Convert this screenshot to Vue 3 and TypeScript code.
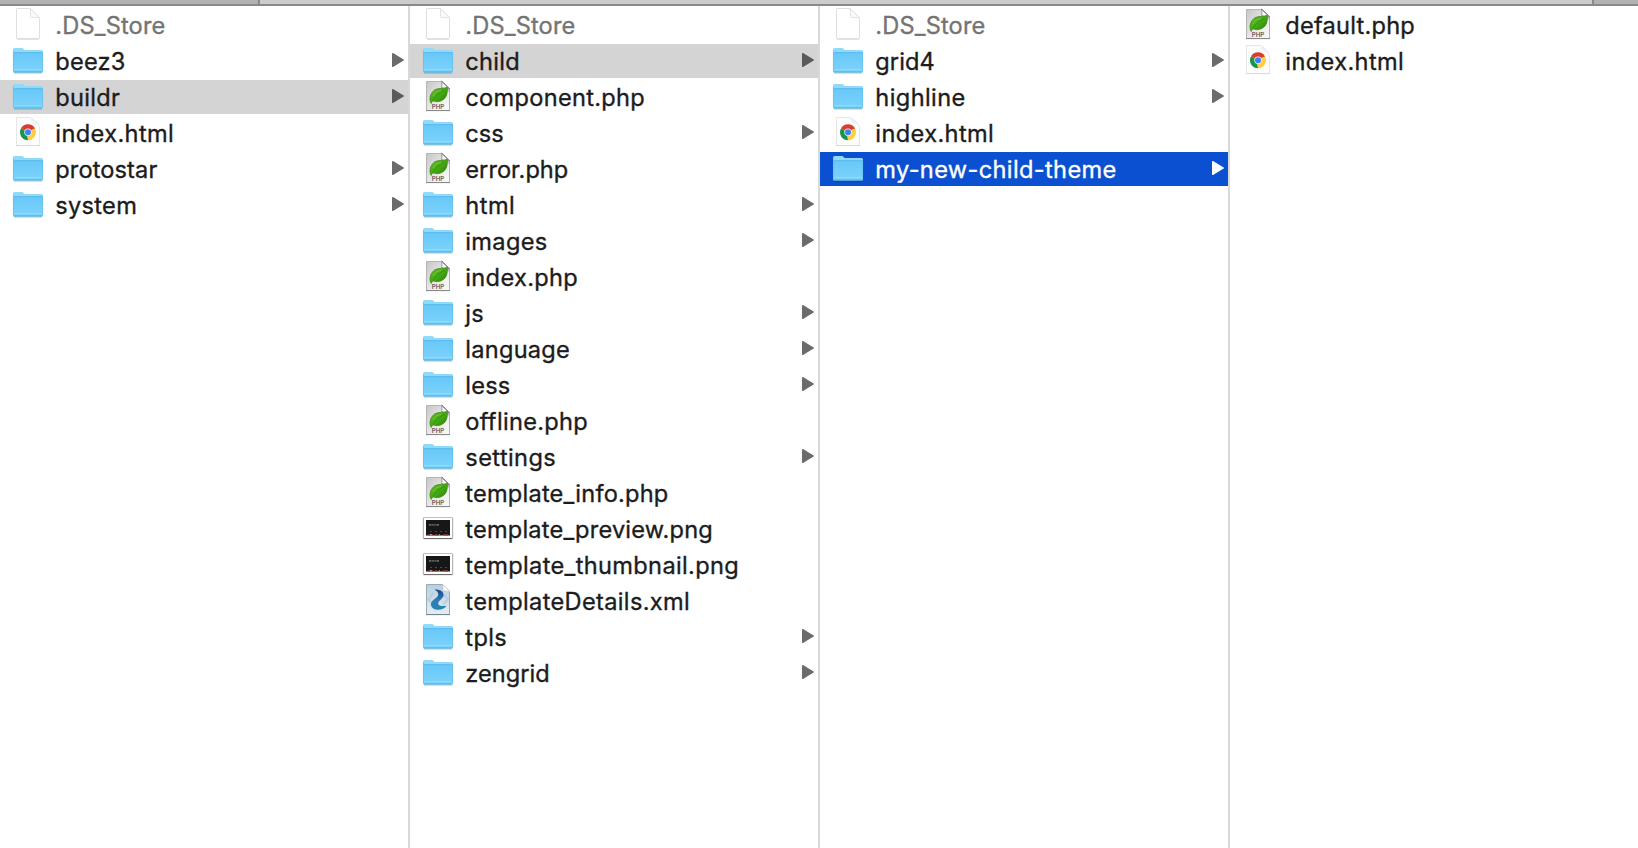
<script setup lang="ts">
type Kind = 'blank' | 'folder' | 'php' | 'chrome' | 'image' | 'xml'

interface Entry {
  name: string
  kind: Kind
  width: number
  state?: 'path' | 'active'
}

const columns: Entry[][] = [
  [
    { name: '.DS_Store', kind: 'blank', width: 110 },
    { name: 'beez3', kind: 'folder', width: 70 },
    { name: 'buildr', kind: 'folder', width: 64.5, state: 'path' },
    { name: 'index.html', kind: 'chrome', width: 118.5 },
    { name: 'protostar', kind: 'folder', width: 102 },
    { name: 'system', kind: 'folder', width: 81.5 },
  ],
  [
    { name: '.DS_Store', kind: 'blank', width: 110 },
    { name: 'child', kind: 'folder', width: 54.5, state: 'path' },
    { name: 'component.php', kind: 'php', width: 179.5 },
    { name: 'css', kind: 'folder', width: 38.5 },
    { name: 'error.php', kind: 'php', width: 103 },
    { name: 'html', kind: 'folder', width: 49.5 },
    { name: 'images', kind: 'folder', width: 82 },
    { name: 'index.php', kind: 'php', width: 112.5 },
    { name: 'js', kind: 'folder', width: 18.5 },
    { name: 'language', kind: 'folder', width: 104.5 },
    { name: 'less', kind: 'folder', width: 45 },
    { name: 'offline.php', kind: 'php', width: 122.5 },
    { name: 'settings', kind: 'folder', width: 90.5 },
    { name: 'template_info.php', kind: 'php', width: 203 },
    { name: 'template_preview.png', kind: 'image', width: 247.5 },
    { name: 'template_thumbnail.png', kind: 'image', width: 273.5 },
    { name: 'templateDetails.xml', kind: 'xml', width: 224.5 },
    { name: 'tpls', kind: 'folder', width: 41.5 },
    { name: 'zengrid', kind: 'folder', width: 84.5 },
  ],
  [
    { name: '.DS_Store', kind: 'blank', width: 110 },
    { name: 'grid4', kind: 'folder', width: 59.5 },
    { name: 'highline', kind: 'folder', width: 90 },
    { name: 'index.html', kind: 'chrome', width: 118.5 },
    { name: 'my-new-child-theme', kind: 'folder', width: 241, state: 'active' },
  ],
  [
    { name: 'default.php', kind: 'php', width: 129.5 },
    { name: 'index.html', kind: 'chrome', width: 118.5 },
  ],
]
</script>

<template>
  <div class="finder">
    <svg class="defs" width="0" height="0" aria-hidden="true">
      <defs>
        <linearGradient id="folderFill" x1="0" y1="0" x2="0" y2="1">
          <stop offset="0" stop-color="#67c8f8" />
          <stop offset="1" stop-color="#7dd3fb" />
        </linearGradient>
        <linearGradient id="pageGrey" x1="0" y1="0" x2="1" y2="1">
          <stop offset="0" stop-color="#c6c6c6" />
          <stop offset="0.6" stop-color="#ececec" />
          <stop offset="1" stop-color="#fafafa" />
        </linearGradient>
        <linearGradient id="leafFill" x1="0" y1="0" x2="1" y2="1">
          <stop offset="0" stop-color="#63bd25" />
          <stop offset="0.5" stop-color="#45ab13" />
          <stop offset="1" stop-color="#267c05" />
        </linearGradient>
        <linearGradient id="pageBlue" x1="0" y1="0" x2="0" y2="1">
          <stop offset="0" stop-color="#b9cfde" />
          <stop offset="1" stop-color="#e2eef7" />
        </linearGradient>
        <linearGradient id="swirl" x1="0" y1="0" x2="0" y2="1">
          <stop offset="0" stop-color="#17458e" />
          <stop offset="0.55" stop-color="#2f7fb5" />
          <stop offset="1" stop-color="#2384b4" />
        </linearGradient>
        <linearGradient id="curl" x1="0" y1="1" x2="1" y2="0">
          <stop offset="0" stop-color="#ffffff" />
          <stop offset="0.5" stop-color="#f0f0f0" />
          <stop offset="1" stop-color="#b4b4b4" />
        </linearGradient>
      </defs>
    </svg>

    <header class="tabs">
      <div class="tab first"></div>
      <div class="tab current"></div>
      <div class="tab add"></div>
    </header>

    <main class="columns">
      <ul v-for="(column, c) in columns" :key="c" class="column">
        <li v-for="entry in column" :key="entry.name" class="row" :class="[entry.kind, entry.state]">
          <svg class="icon" width="34" height="34" viewBox="0 0 34 34">
            <g v-if="entry.kind === 'folder'">
              <path d="M3 29h28" stroke="#000" stroke-opacity=".22" stroke-width="1.2" />
              <path d="M2 6q0-2 1.600-2h7.200q1 0 1.700.8l1 1.200H30.500q1.500 0 1.500 1.500V27q0 1.500-1.500 1.500h-27Q2 28.500 2 27z" fill="#8fdafb" />
              <path d="M2 8.700h30V27q0 1.300-1.500 1.300h-27Q2 28.300 2 27z" fill="url(#folderFill)" />
              <path d="M2.500 8.700h29" stroke="#59b9e9" stroke-width="1" />
              <path d="M2.400 6v21M31.600 8v19" stroke="#5fbce6" stroke-width=".8" opacity=".7" />
              <path d="M3 25.500h28" stroke="#93dcfc" stroke-width=".8" />
              <path d="M2.700 28h28.600" stroke="#53a9d2" stroke-width="1" />
            </g>
            <g v-else-if="entry.kind === 'blank'">
              <path d="M5.500 1.200q0-.7.700-.7H19.500l9 9V30q0 .7-.7.700H6.200q-.7 0-.7-.7z" fill="#fff" stroke="#dfdfdf" />
              <path d="M19.500.8V8.500q0 1 1 1h7.700z" fill="#fafafa" stroke="#e3e3e3" />
              <path d="M6 31.200h22" stroke="#d2d2d2" stroke-width=".8" />
            </g>
            <g v-else-if="entry.kind === 'php'">
              <path d="M5.500 1.500H21.500l7 7V30.500h-23z" fill="url(#pageGrey)" stroke="#b5b5b5" />
              <path d="M5 30.600h24" stroke="#858585" />
              <path d="M20.500 1.200L28.800 8.900z" stroke="#888" stroke-width="1" />
              <path d="M20.800 1.700V8l7.200.6z" fill="#f8f8f8" stroke="#8e8e8e" stroke-width=".9" />
              <path d="M21.500 8.300l7 .6v3.100z" fill="#777" opacity=".4" />
              <path d="M10.200 23.500C7.500 19 9.500 12.500 14 9.700c3.500-2 8.500-.6 12.300-2.500C26.500 10 26.600 15 24 18c-3 3.600-8.500 4.500-12.200 2.800-.8.700-1.200 1.700-1.600 2.700z" fill="url(#leafFill)" stroke="#38850f" stroke-width=".7" />
              <path d="M11.500 20.800c3.200-5 7-8 12-10.500" fill="none" stroke="#2e8909" stroke-width=".8" />
              <path d="M12 16c1.500-3.500 4-5 8-5.300" fill="none" stroke="#8cd64f" stroke-width="1" opacity=".6" />
              <text x="17" y="29" text-anchor="middle" textLength="12.500" lengthAdjust="spacingAndGlyphs" class="php-label">PHP</text>
            </g>
            <g v-else-if="entry.kind === 'chrome'">
              <path d="M5.500 1.500H19.500l9 9V29.500h-23z" fill="#fdfdfd" stroke="#e6e6e6" />
              <path d="M18.500 1.200c2.200 1.800 1.500 4.600 1.500 6.300 3-.4 6.500.2 8.500 2.500-1-3-6.500-8.500-10-8.800z" fill="url(#curl)" />
              <path d="M5 29.600h24" stroke="#d5d5d5" stroke-width=".8" />
              <g transform="translate(17 16.300)">
                <path d="M0 0L-6.930-4A8 8 0 0 1 6.930-4z" fill="#db3c30" />
                <path d="M0 0L-6.930-4A8 8 0 0 0 0 8z" fill="#17954f" />
                <path d="M0 0L6.930-4A8 8 0 0 1 0 8z" fill="#ffce43" />
                <path d="M0-4H6.900L7.200-3.500H0z" fill="#db3c30" />
                <path d="M-6.930-4L-3.460 2-1 3z" fill="#17954f" />
                <path d="M3.460 2L0 8-1 4z" fill="#ffce43" />
                <circle r="3.700" fill="#f2f2f2" />
                <circle r="3" fill="#4080f0" />
              </g>
            </g>
            <g v-else-if="entry.kind === 'image'">
              <rect x="1.600" y="5" width="30.800" height="22.400" rx="1.500" fill="#000" opacity=".14" />
              <rect x="2.300" y="5.500" width="29.400" height="21.500" rx=".8" fill="#888" opacity=".65" />
              <path d="M3 26.500h28" stroke="#6c6c6c" stroke-width="1" />
              <rect x="3" y="6" width="28" height="20" fill="#fff" />
              <rect x="5" y="8" width="24" height="15.500" fill="#171717" />
              <path d="M8 12.800h2.500m.7 0h1.600m.7 0h1.300m.7 0h2.500" stroke="#686868" stroke-width="1.800" />
              <path d="M9 19.500h2m3 0h2m3 0h2m3 0h2" stroke="#555" stroke-width=".8" />
              <path d="M7 22.800h5m2 0h3m5 0h5" stroke="#9b3928" stroke-width="1.300" />
              <path d="M9 22.800h2m7 0h1" stroke="#bcb8b0" stroke-width="1" />
            </g>
            <g v-else>
              <path d="M5.500.500H21.500l7 7V30.500h-23z" fill="url(#pageBlue)" stroke="#9caab4" />
              <path d="M5 30.600h24" stroke="#737f89" />
              <path d="M12.500 9L7.500 15.500l6.500 6M22 10l5 5.500-5 5" fill="none" stroke="#a9c3d5" stroke-width="2.500" opacity=".55" />
              <path d="M20.500.700c1.800 1.700 1.300 4.500 1 6.300 2.500-.3 5.500.500 7 2 0-3-5-8-8-8.300z" fill="#f8fafb" stroke="#aab4bb" stroke-width=".6" />
              <path d="M13.500 5.500c5.500-.2 9 2 9 5.500 0 4-6 5.500-5.200 9 .6 2.300 4 2.200 8.200 1.800C24 24.500 20 26 16.500 25.800c-4.500-.3-7-3-6.500-6.300.6-4 7.500-5.500 7.300-9.300-.1-2-1.800-3.600-3.800-4.700z" fill="url(#swirl)" />
            </g>
          </svg>
          <svg class="label" :width="entry.width + 6" height="34">
            <text x="-0.700" y="26" :textLength="entry.width" lengthAdjust="spacing">{{ entry.name }}</text>
          </svg>
          <svg v-if="entry.kind === 'folder'" class="arrow" width="12" height="14" viewBox="0 0 12 14">
            <path d="M.700.700L11.300 7 .700 13.300z" stroke-width="1.400" stroke-linejoin="round" />
          </svg>
        </li>
      </ul>
    </main>
  </div>
</template>

<style>
body {
  margin: 0;
  background: #fff;
  overflow: hidden;
}
</style>

<style scoped>
.finder {
  width: 100%;
  height: 100vh;
  display: flex;
  flex-direction: column;
  background: #fff;
  font-family: Inter, "Liberation Sans", sans-serif;
}
.defs {
  display: block;
  flex: none;
}
.tabs {
  box-sizing: border-box;
  display: flex;
  flex: none;
  height: 6px;
  border-bottom: 2px solid #8a888a;
}
.tab {
  box-sizing: border-box;
  background: #b2b0b2;
}
.first {
  width: 260px;
  border-right: 2px solid #8a888a;
}
.current {
  flex: 1;
  background: #cdcccd;
}
.add {
  width: 46px;
  border-left: 2px solid #8a888a;
}
.columns {
  flex: 1;
  display: grid;
  grid-template-columns: 410px 410px 410px 408px;
}
.column {
  box-sizing: border-box;
  margin: 0;
  padding: 2px 0 0;
  list-style: none;
  border-right: 2px solid #d8d8d8;
}
.column:last-child {
  border-right: 0;
}
.row {
  display: flex;
  height: 34px;
  margin-bottom: 2px;
  padding-left: 11px;
  color: #1c1c1c;
}
.path {
  background: #d4d4d4;
}
.active {
  background: #0a50d0;
  color: #fff;
}
.blank {
  color: #747474;
}
.icon {
  flex: none;
}
.label {
  flex: none;
  margin-left: 11px;
  overflow: visible;
}
.label text {
  font-size: 23.600px;
  fill: currentColor;
  stroke: currentColor;
  stroke-width: 0.350px;
}
.arrow {
  flex: none;
  align-self: flex-start;
  margin: 9px 4px 0 auto;
  fill: #6b6b6b;
  stroke: #6b6b6b;
}
.path .arrow {
  fill: #5a5a5a;
  stroke: #5a5a5a;
}
.active .arrow {
  fill: #fff;
  stroke: #fff;
}
.php-label {
  font-size: 6px;
  font-weight: 500;
  fill: #444;
}
</style>
